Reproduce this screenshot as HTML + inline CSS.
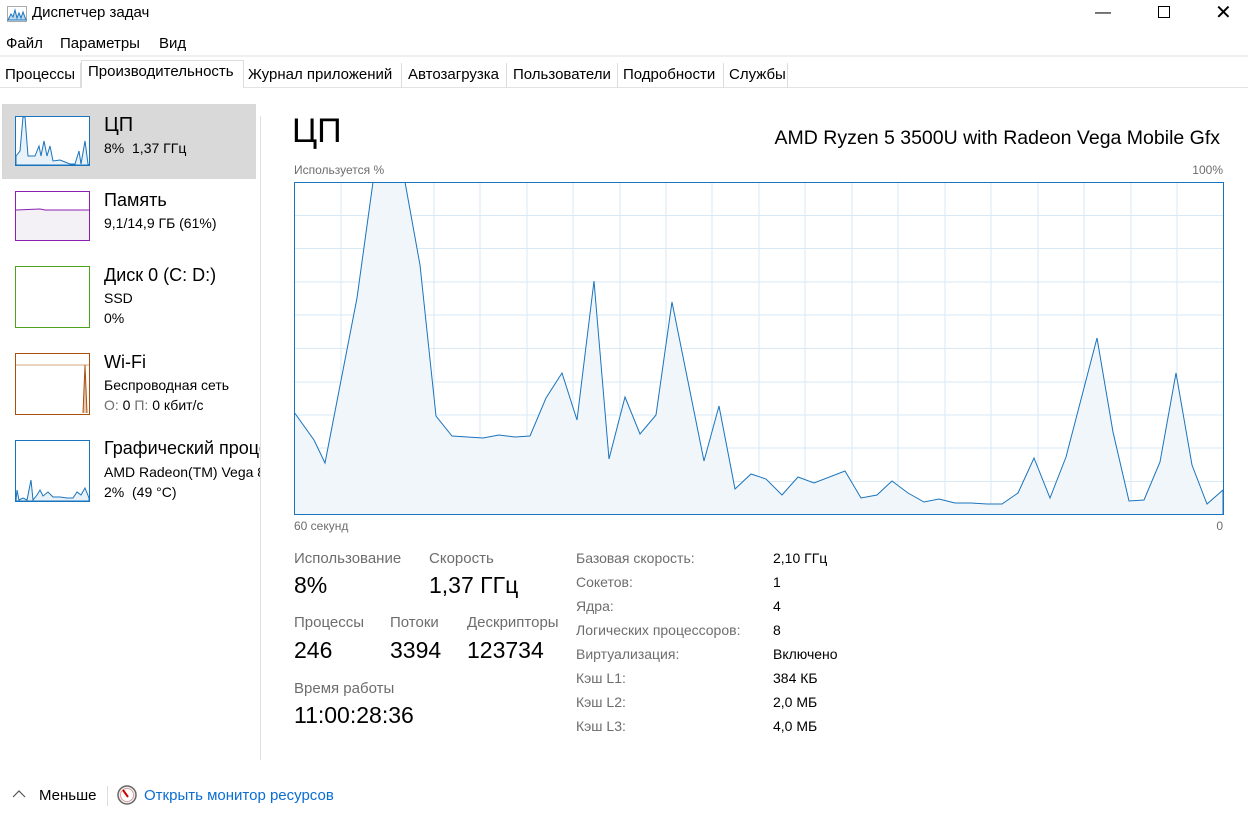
<!DOCTYPE html>
<html><head><meta charset="utf-8"><style>
*{margin:0;padding:0;box-sizing:border-box}
body{width:1248px;height:820px;background:#fff;font-family:"Segoe UI","Liberation Sans","DejaVu Sans",sans-serif;color:#000;position:relative;overflow:hidden}
.a{position:absolute;white-space:nowrap}
.tab{position:absolute;top:63px;height:25px;font-size:15px;padding-top:3px;border-right:1px solid #dcdcdc}
.g{color:#6d6d6d}
</style></head><body>
<svg class="a" style="left:7px;top:6px" width="20" height="16"><rect x="0.5" y="0.5" width="19" height="15" fill="#fff" stroke="#aaa"/><path d="M1 14 L4 8 L6 11 L8 4 L10 12 L12 7 L14 12 L16 6 L19 14 Z" fill="#bcd9f0" stroke="#1a74bd"/></svg>
<div class="a" style="left:32px;top:4px;font-size:15px">Диспетчер задач</div>
<div class="a" style="left:1095px;top:4px;font-size:16px">&#8212;</div>
<div class="a" style="left:1158px;top:6px;width:12px;height:12px;border:1.3px solid #000"></div>
<div class="a" style="left:1215px;top:0px;font-size:20px;font-weight:300">&#10005;</div>
<div class="a" style="left:6px;top:35px;font-size:15px">Файл</div>
<div class="a" style="left:60px;top:35px;font-size:15px">Параметры</div>
<div class="a" style="left:159px;top:35px;font-size:15px">Вид</div>
<div class="a" style="left:0;top:55px;width:1248px;height:2px;background:#f0f0f0"></div>
<div class="a" style="left:0;top:87px;width:1248px;height:1px;background:#e3e3e3"></div>
<div class="tab" style="left:0;width:81px;padding-left:5px">Процессы</div>
<div class="a" style="left:81px;top:60px;width:163px;height:28px;background:#fff;border:1px solid #dcdcdc;border-bottom:none;font-size:15px;padding:2px 0 0 6px">Производительность</div>
<div class="tab" style="left:244px;width:158px;padding-left:4px">Журнал приложений</div>
<div class="tab" style="left:402px;width:105px;padding-left:6px">Автозагрузка</div>
<div class="tab" style="left:507px;width:111px;padding-left:6px">Пользователи</div>
<div class="tab" style="left:618px;width:106px;padding-left:5px">Подробности</div>
<div class="tab" style="left:724px;width:64px;padding-left:5px">Службы</div>

<div class="a" style="left:2px;top:104px;width:254px;height:75px;background:#d9d9d9"></div>
<div class="a" style="left:260px;top:116px;width:1px;height:644px;background:#e0e0e0"></div>

<svg class="a" style="left:15px;top:116px" width="75" height="50"><rect x="0.5" y="0.5" width="74" height="49" fill="#fff" stroke="#1a74bd"/><path d="M1 40 L5 35 L8 1 L10 1 L13 40 L20 40 L24 30 L26 40 L29 25 L32 40 L35 30 L38 45 L45 44 L50 46 L55 48 L60 48 L64 35 L66 48 L70 25 L73 48 L74 49 L1 49Z" fill="#eaf2f9" stroke="#1a74bd"/></svg>
<div class="a" style="left:104px;top:114px;font-size:20px">ЦП</div>
<div class="a" style="left:104px;top:140px;font-size:14px">8%&nbsp; 1,37 ГГц</div>

<svg class="a" style="left:15px;top:191px" width="75" height="50"><rect x="0.5" y="0.5" width="74" height="49" fill="#f4f1f6" stroke="#8b1fb0"/><rect x="1" y="1" width="73" height="18" fill="#fff"/><path d="M1 19 L25 18 L30 19 L74 19" fill="none" stroke="#8b1fb0"/></svg>
<div class="a" style="left:104px;top:190px;font-size:18px">Память</div>
<div class="a" style="left:104px;top:215px;font-size:14px">9,1/14,9 ГБ (61%)</div>

<svg class="a" style="left:15px;top:266px" width="75" height="62"><rect x="0.5" y="0.5" width="74" height="61" fill="#fff" stroke="#4da31c"/></svg>
<div class="a" style="left:104px;top:265px;font-size:18px">Диск 0 (C: D:)</div>
<div class="a" style="left:104px;top:290px;font-size:14px">SSD</div>
<div class="a" style="left:104px;top:310px;font-size:14px">0%</div>

<svg class="a" style="left:15px;top:353px" width="75" height="62"><rect x="0.5" y="0.5" width="74" height="61" fill="#fff" stroke="#a84f0e"/><path d="M1 12 L74 12" stroke="#d6a882"/><path d="M68 60 L70 12 L72 60" fill="#e8c9b0" stroke="#a84f0e"/></svg>
<div class="a" style="left:104px;top:352px;font-size:18px">Wi-Fi</div>
<div class="a" style="left:104px;top:377px;font-size:14px">Беспроводная сеть</div>
<div class="a" style="left:104px;top:397px;font-size:14px"><span class="g">О:</span> 0 <span class="g">П:</span> 0 кбит/с</div>

<svg class="a" style="left:15px;top:440px" width="75" height="62"><rect x="0.5" y="0.5" width="74" height="61" fill="#fff" stroke="#1a74bd"/><path d="M1 60 L2 50 L4 60 L8 58 L12 60 L16 40 L18 60 L22 55 L25 50 L28 56 L33 52 L38 57 L45 57 L52 58 L58 58 L62 52 L66 55 L70 48 L74 58 L74 61 L1 61Z" fill="#eaf2f9" stroke="#1a74bd"/></svg>
<div class="a" style="left:104px;top:438px;font-size:18px;width:156px;overflow:hidden">Графический процессор</div>
<div class="a" style="left:104px;top:464px;font-size:14px;width:156px;overflow:hidden">AMD Radeon(TM) Vega 8</div>
<div class="a" style="left:104px;top:484px;font-size:14px">2%&nbsp; (49 °C)</div>

<div class="a" style="left:292px;top:112px;font-size:34px;font-weight:400">ЦП</div>
<div class="a" style="right:28px;top:127px;font-size:19.5px">AMD Ryzen 5 3500U with Radeon Vega Mobile Gfx</div>
<div class="a g" style="left:294px;top:163px;font-size:12px">Используется %</div>
<div class="a g" style="right:25px;top:163px;font-size:12px">100%</div>
<svg class="a" style="left:294px;top:182px" width="930" height="333">
<g stroke="#d9eaf7" stroke-width="1">
<path d="M47 0V333M93 0V333M140 0V333M186 0V333M233 0V333M279 0V333M326 0V333M372 0V333M418 0V333M465 0V333M511 0V333M558 0V333M604 0V333M651 0V333M697 0V333M744 0V333M790 0V333M837 0V333M883 0V333"/>
<path d="M0 33.5H930M0 66.5H930M0 100H930M0 133H930M0 166.5H930M0 200H930M0 233H930M0 266H930M0 299.5H930"/>
</g>
<path d="M0 230 L20 258 L31 281 L63 116 L79 0 L111 0 L126 83 L142 234 L158 254 L189 256 L205 253 L221 255 L236 254 L252 216 L268 191 L283 238 L300 99 L315 277 L331 215 L346 252 L362 233 L378 120 L410 279 L425 224 L441 307 L457 292 L472 297 L488 313 L504 295 L520 301 L551 289 L567 316 L583 313 L598 299 L614 311 L630 320 L645 317 L661 321 L677 321 L693 322 L708 322 L724 311 L740 276 L756 316 L772 275 L803 156 L819 250 L835 319 L850 318 L866 280 L882 191 L898 283 L913 322 L929 308 L929 333 L0 333Z" fill="#f1f6fb" stroke="#1a74bd" stroke-width="1"/>
<rect x="0.5" y="0.5" width="929" height="332" fill="none" stroke="#1a74bd"/>
</svg>
<div class="a g" style="left:294px;top:519px;font-size:12px">60 секунд</div>
<div class="a g" style="right:25px;top:519px;font-size:12px">0</div>

<div class="a g" style="left:294px;top:550px;font-size:15px">Использование</div>
<div class="a" style="left:294px;top:572px;font-size:23px">8%</div>
<div class="a g" style="left:429px;top:550px;font-size:15px">Скорость</div>
<div class="a" style="left:429px;top:572px;font-size:23px">1,37 ГГц</div>
<div class="a g" style="left:294px;top:614px;font-size:15px">Процессы</div>
<div class="a" style="left:294px;top:637px;font-size:23px">246</div>
<div class="a g" style="left:390px;top:614px;font-size:15px">Потоки</div>
<div class="a" style="left:390px;top:637px;font-size:23px">3394</div>
<div class="a g" style="left:467px;top:614px;font-size:15px">Дескрипторы</div>
<div class="a" style="left:467px;top:637px;font-size:23px">123734</div>
<div class="a g" style="left:294px;top:680px;font-size:15px">Время работы</div>
<div class="a" style="left:294px;top:702px;font-size:23px">11:00:28:36</div>

<div class="a g" style="left:576px;top:546px;font-size:14px;line-height:24px">Базовая скорость:<br>Сокетов:<br>Ядра:<br>Логических процессоров:<br>Виртуализация:<br>Кэш L1:<br>Кэш L2:<br>Кэш L3:</div>
<div class="a" style="left:773px;top:546px;font-size:14px;line-height:24px">2,10 ГГц<br>1<br>4<br>8<br>Включено<br>384 КБ<br>2,0 МБ<br>4,0 МБ</div>

<svg class="a" style="left:12px;top:789px" width="14" height="10"><path d="M1 8 L7 2 L13 8" fill="none" stroke="#555" stroke-width="1.2"/></svg>
<div class="a" style="left:39px;top:787px;font-size:15px">Меньше</div>
<div class="a" style="left:107px;top:786px;width:1px;height:20px;background:#ddd"></div>
<svg class="a" style="left:117px;top:785px" width="20" height="20"><circle cx="10" cy="10" r="9" fill="#eee" stroke="#666" stroke-width="1.5"/><circle cx="10" cy="10" r="6.5" fill="#fff" stroke="#d88" stroke-width="0.8"/><path d="M6 5 L11 12" stroke="#c00" stroke-width="2"/></svg>
<div class="a" style="left:144px;top:787px;font-size:15px;color:#0a6ed1">Открыть монитор ресурсов</div>
</body></html>
